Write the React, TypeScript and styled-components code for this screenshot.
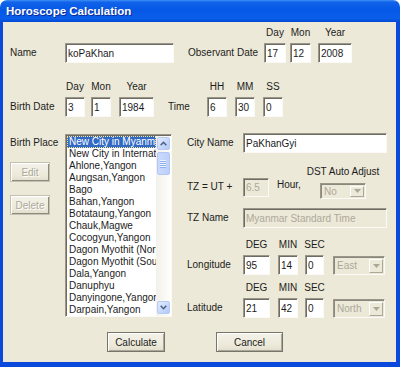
import React from "react";
import styled, { createGlobalStyle } from "styled-components";

const GlobalStyle = createGlobalStyle`
  html, body {
    margin: 0;
    padding: 0;
    background: #ffffff;
  }
  body {
    font-family: "Liberation Sans", Arial, sans-serif;
    font-size: 10px;
    color: #1c1c1c;
  }
`;

const Window = styled.div`
  width: 400px;
  height: 367px;
  display: flex;
  flex-direction: column;
  overflow: hidden;
`;

const TitleBar = styled.div`
  height: 22px;
  flex: none;
  display: flex;
  align-items: center;
  padding-left: 6px;
  border-radius: 7px 7px 0 0;
  background: linear-gradient(
    180deg,
    #3d8df6 0%,
    #1263ea 10%,
    #0558e5 45%,
    #0a5ee9 85%,
    #0347d2 100%
  );
  color: #fff;
  font-weight: bold;
  font-size: 11.5px;
  text-shadow: 1px 1px #0b2a9a;
`;

const Client = styled.div`
  flex: 1;
  background: #ece9d8;
  border: solid #0b48dc;
  border-width: 0 4px 5px 3px;
  padding: 5px 0 0 7px;
  display: flex;
  flex-direction: column;
`;

const Row = styled.div<{ $top?: number }>`
  display: flex;
  align-items: flex-end;
  margin-top: ${(p) => p.$top ?? 0}px;
`;

const Section = styled.div`
  display: flex;
  align-items: flex-start;
  margin-top: 16px;
`;

const Label = styled.span<{ $w: number; $left?: number; $bottom?: number }>`
  flex: none;
  width: ${(p) => p.$w}px;
  margin-left: ${(p) => p.$left ?? 0}px;
  margin-bottom: ${(p) => p.$bottom ?? 0}px;
  height: 20px;
  line-height: 20px;
  white-space: nowrap;
`;

const Field = styled.div<{ $w: number; $left?: number }>`
  flex: none;
  width: ${(p) => p.$w}px;
  margin-left: ${(p) => p.$left ?? 0}px;
  display: flex;
  flex-direction: column;
  align-items: center;
`;

const Caption = styled.span<{ $gap?: number }>`
  height: 12px;
  line-height: 12px;
  margin-bottom: ${(p) => p.$gap ?? 4}px;
  white-space: nowrap;
`;

const TextBox = styled.input<{ $w: number; $h?: number; $bottom?: number }>`
  flex: none;
  box-sizing: border-box;
  width: ${(p) => p.$w}px;
  height: ${(p) => p.$h ?? 20}px;
  margin: 0 0 ${(p) => p.$bottom ?? 0}px 0;
  padding: 0 0 0 2px;
  font: inherit;
  color: #1c1c1c;
  background: #fff;
  border: 1px solid;
  border-color: #9a978a #fbfaf6 #fbfaf6 #9a978a;
  box-shadow: inset 1px 1px 0 #6e6c62;
  outline: none;
  &:disabled {
    background: #ece9d8;
    color: #aca899;
  }
`;

const Button = styled.button<{ $w: number; $left?: number; $top?: number }>`
  flex: none;
  box-sizing: border-box;
  width: ${(p) => p.$w}px;
  height: 20px;
  margin: ${(p) => p.$top ?? 0}px 0 0 ${(p) => p.$left ?? 0}px;
  padding: 0;
  font: inherit;
  color: #1c1c1c;
  background: linear-gradient(180deg, #f4f2ea 0%, #ece9d8 70%, #e0ddcc 100%);
  border: 1px solid #77756a;
  box-shadow: inset 1px 1px 0 #ffffff, inset -1px -1px 0 #aca899;
  &:disabled {
    color: #aca899;
    border-color: #c4c1b2;
    text-shadow: 1px 1px 0 #fff;
    box-shadow: inset 1px 1px 0 #ffffff, inset -1px -1px 0 #8e8b7e;
  }
`;

const LeftCol = styled.div`
  flex: none;
  width: 55px;
  display: flex;
  flex-direction: column;
  align-items: flex-start;
`;

const ListBox = styled.div`
  flex: none;
  box-sizing: border-box;
  width: 107px;
  height: 183px;
  margin-top: 1px;
  display: flex;
  background: #fff;
  border: 1px solid;
  border-color: #9a978a #fbfaf6 #fbfaf6 #9a978a;
  box-shadow: inset 1px 1px 0 #6e6c62;
  padding: 1px 1px 0 1px;
  overflow: hidden;
`;

const Items = styled.div`
  flex: 1;
  min-width: 0;
  overflow: hidden;
`;

const Item = styled.div<{ $sel?: boolean }>`
  height: 12px;
  line-height: 12px;
  padding-left: 2px;
  white-space: nowrap;
  overflow: hidden;
  box-sizing: border-box;
  background: ${(p) => (p.$sel ? "#316ac5" : "transparent")};
  color: ${(p) => (p.$sel ? "#fff" : "#1c1c1c")};
  outline: ${(p) => (p.$sel ? "1px dotted #ffe48a" : "none")};
  outline-offset: -1px;
`;

const ScrollBar = styled.div`
  flex: none;
  width: 14px;
  display: flex;
  flex-direction: column;
  align-items: center;
  background: linear-gradient(90deg, #f3f1ea, #fdfdfa);
  padding: 1px 0 2px;
  box-sizing: border-box;
`;

const ScrollButton = styled.div<{ $top?: boolean }>`
  width: 13px;
  height: 13px;
  box-sizing: border-box;
  border: 1px solid #b6caf6;
  border-radius: 2px;
  background: linear-gradient(135deg, #e3ecfe 0%, #c6d7fc 60%, #b3c8f6 100%);
  display: flex;
  align-items: center;
  justify-content: center;
  margin-top: ${(p) => (p.$top ? 0 : "auto")};
`;

const Thumb = styled.div`
  width: 13px;
  height: 23px;
  margin-top: 2px;
  box-sizing: border-box;
  border: 1px solid #b2c6f5;
  border-radius: 2px;
  background: linear-gradient(90deg, #cbdafd, #bcd0fb);
  display: flex;
  flex-direction: column;
  align-items: center;
  justify-content: center;
  gap: 1px;
`;

const Grip = styled.span`
  width: 6px;
  height: 1px;
  background: #eef3fe;
  box-shadow: 0 1px 0 #8eaef2;
`;

const RightCol = styled.div`
  flex: none;
  width: 200px;
  margin-left: 15px;
  display: flex;
  flex-direction: column;
`;

const ComboGroup = styled.div<{ $w: number }>`
  flex: none;
  width: ${(p) => p.$w}px;
  display: flex;
  flex-direction: column;
  align-items: center;
`;

const Combo = styled.div<{ $w: number; $h: number; $left?: number }>`
  flex: none;
  box-sizing: border-box;
  width: ${(p) => p.$w}px;
  height: ${(p) => p.$h}px;
  margin-left: ${(p) => p.$left ?? 0}px;
  display: flex;
  align-items: center;
  padding: 0 1px 0 3px;
  color: #aca899;
  background: #ece9d8;
  border: 1px solid;
  border-color: #9a978a #fbfaf6 #fbfaf6 #9a978a;
  box-shadow: inset 1px 1px 0 #8a877b;
`;

const ComboText = styled.span`
  flex: 1;
`;

const DropButton = styled.span`
  flex: none;
  width: 14px;
  height: calc(100% - 3px);
  box-sizing: border-box;
  border: 1px solid;
  border-color: #fff #aca899 #aca899 #fff;
  background: #ece9d8;
  display: flex;
  align-items: center;
  justify-content: center;
`;

const ButtonRow = styled.div`
  display: flex;
  margin-top: 14px;
  padding-left: 97px;
`;

const cities = [
  "New City in Myanmar",
  "New City in International",
  "Ahlone,Yangon",
  "Aungsan,Yangon",
  "Bago",
  "Bahan,Yangon",
  "Botataung,Yangon",
  "Chauk,Magwe",
  "Cocogyun,Yangon",
  "Dagon Myothit (North)",
  "Dagon Myothit (South)",
  "Dala,Yangon",
  "Danuphyu",
  "Danyingone,Yangon",
  "Darpain,Yangon",
  "Dawbon,Yangon",
];

const Chevron = ({ up }: { up?: boolean }) => (
  <svg width="7" height="5" viewBox="0 0 7 5">
    <path
      d={up ? "M0.7 4.2 L3.5 1.3 L6.3 4.2" : "M0.7 0.8 L3.5 3.7 L6.3 0.8"}
      fill="none"
      stroke="#4d6185"
      strokeWidth="1.6"
    />
  </svg>
);

const DownTriangle = () => (
  <svg width="7" height="4" viewBox="0 0 7 4">
    <path d="M0 0 H7 L3.5 4 Z" fill="#aca899" />
  </svg>
);

const DisabledCombo = (props: { w: number; h: number; left?: number; value: string }) => (
  <Combo $w={props.w} $h={props.h} $left={props.left}>
    <ComboText>{props.value}</ComboText>
    <DropButton>
      <DownTriangle />
    </DropButton>
  </Combo>
);

const CoordRow = (props: { top: number; name: string; deg: string; min: string; sec: string; dir: string }) => (
  <Row $top={props.top}>
    <Label $w={56}>{props.name}</Label>
    <Field $w={27}>
      <Caption>DEG</Caption>
      <TextBox $w={27} defaultValue={props.deg} />
    </Field>
    <Field $w={20} $left={8}>
      <Caption>MIN</Caption>
      <TextBox $w={20} defaultValue={props.min} />
    </Field>
    <Field $w={19} $left={7}>
      <Caption>SEC</Caption>
      <TextBox $w={19} defaultValue={props.sec} />
    </Field>
    <DisabledCombo w={52} h={19} left={9} value={props.dir} />
  </Row>
);

const App = () => {
  return (
    <>
      <GlobalStyle />
      <Window>
        <TitleBar>Horoscope Calculation</TitleBar>
        <Client>
          {/* name + observant date */}
          <Row>
            <Label $w={55}>Name</Label>
            <TextBox $w={109} defaultValue="koPaKhan" />
            <Label $w={76} $left={14}>Observant Date</Label>
            <Field $w={22}>
              <Caption>Day</Caption>
              <TextBox $w={22} defaultValue="17" />
            </Field>
            <Field $w={21} $left={4}>
              <Caption>Mon</Caption>
              <TextBox $w={21} defaultValue="12" />
            </Field>
            <Field $w={34} $left={7}>
              <Caption>Year</Caption>
              <TextBox $w={34} defaultValue="2008" />
            </Field>
          </Row>

          {/* birth date + time */}
          <Row $top={18}>
            <Label $w={55}>Birth Date</Label>
            <Field $w={20}>
              <Caption>Day</Caption>
              <TextBox $w={20} defaultValue="3" />
            </Field>
            <Field $w={20} $left={6}>
              <Caption>Mon</Caption>
              <TextBox $w={20} defaultValue="1" />
            </Field>
            <Field $w={35} $left={8}>
              <Caption>Year</Caption>
              <TextBox $w={35} defaultValue="1984" />
            </Field>
            <Label $w={39} $left={14}>Time</Label>
            <Field $w={20}>
              <Caption>HH</Caption>
              <TextBox $w={20} defaultValue="6" />
            </Field>
            <Field $w={20} $left={8}>
              <Caption>MM</Caption>
              <TextBox $w={20} defaultValue="30" />
            </Field>
            <Field $w={20} $left={8}>
              <Caption>SS</Caption>
              <TextBox $w={20} defaultValue="0" />
            </Field>
          </Row>

          <Section>
            <LeftCol>
              <Label $w={55}>Birth Place</Label>
              <Button $w={40} $top={9} disabled>Edit</Button>
              <Button $w={40} $top={13} disabled>Delete</Button>
            </LeftCol>

            <ListBox>
              <Items>
                {cities.map((c, i) => (
                  <Item key={c} $sel={i === 0}>{c}</Item>
                ))}
              </Items>
              <ScrollBar>
                <ScrollButton $top>
                  <Chevron up />
                </ScrollButton>
                <Thumb>
                  <Grip />
                  <Grip />
                  <Grip />
                  <Grip />
                </Thumb>
                <ScrollButton>
                  <Chevron />
                </ScrollButton>
              </ScrollBar>
            </ListBox>

            <RightCol>
              <Row>
                <Label $w={56}>City Name</Label>
                <TextBox $w={144} defaultValue="PaKhanGyi" />
              </Row>
              <Row $top={13}>
                <Label $w={56} $bottom={2}>TZ = UT +</Label>
                <TextBox $w={26} $h={19} $bottom={2} disabled defaultValue="6.5" />
                <Label $w={43} $left={8} $bottom={4}>Hour,</Label>
                <ComboGroup $w={46}>
                  <Caption $gap={5}>DST Auto Adjust</Caption>
                  <DisabledCombo w={46} h={16} value="No" />
                </ComboGroup>
              </Row>
              <Row $top={9}>
                <Label $w={56}>TZ Name</Label>
                <TextBox $w={144} disabled defaultValue="Myanmar Standard Time" />
              </Row>
              <CoordRow top={11} name="Longitude" deg="95" min="14" sec="0" dir="East" />
              <CoordRow top={7} name="Latitude" deg="21" min="42" sec="0" dir="North" />
            </RightCol>
          </Section>

          <ButtonRow>
            <Button $w={58}>Calculate</Button>
            <Button $w={67} $left={51}>Cancel</Button>
          </ButtonRow>
        </Client>
      </Window>
    </>
  );
};

export default App;
